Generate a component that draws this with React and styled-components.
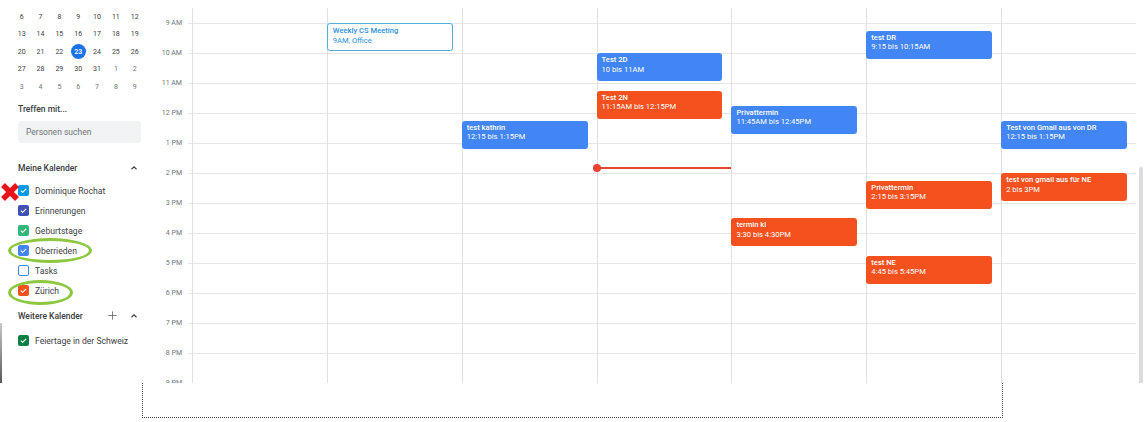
import React from "react";
import styled, { createGlobalStyle } from "styled-components";

const Global = createGlobalStyle`
  html, body { margin: 0; padding: 0; background: #fff; }
  body { font-family: Roboto, "Liberation Sans", Arial, sans-serif; color: #3c4043; }
  * { box-sizing: border-box; }
`;

const Page = styled.div`
  width: 1146px;
  height: 422px;
  display: flex;
  flex-direction: column;
  overflow: hidden;
  background: #fff;
`;

const AppRow = styled.div`
  height: 383px;
  display: flex;
`;

/* ---------- Sidebar ---------- */
const Sidebar = styled.aside`
  width: 160px;
  flex: none;
  position: relative;
  display: flex;
  flex-direction: column;
`;

const MiniCal = styled.div`
  display: grid;
  grid-template-columns: repeat(7, 18.83px);
  grid-auto-rows: 17.5px;
  padding: 8px 0 0 12.3px;
`;

const Day = styled.div`
  display: flex;
  align-items: center;
  justify-content: center;
  font-size: 7px;
  color: ${(p) => (p.$muted ? "#70757a" : "#3c4043")};
`;

const Today = styled.span`
  width: 15px;
  height: 15px;
  border-radius: 50%;
  background: #1a73e8;
  color: #fff;
  font-weight: 500;
  display: flex;
  align-items: center;
  justify-content: center;
`;

const SectionTitle = styled.div`
  height: 20px;
  margin-top: ${(p) => p.$mt || 0}px;
  padding: 0 18px;
  display: flex;
  align-items: center;
  font-size: 8.5px;
  font-weight: 500;
  color: #3c4043;
`;

const HeaderRow = styled(SectionTitle)`
  justify-content: space-between;
  padding-right: 21px;
`;

const HeaderIcons = styled.div`
  display: flex;
  align-items: center;
  gap: 11px;
`;

const Search = styled.div`
  margin: 2px 0 0 18px;
  width: 123px;
  height: 22px;
  border-radius: 3px;
  background: #f1f3f4;
  display: flex;
  align-items: center;
  padding-left: 8px;
  font-size: 8.5px;
  color: #70757a;
`;

const CalList = styled.div`
  margin-top: ${(p) => p.$mt || 0}px;
  display: flex;
  flex-direction: column;
`;

const CalItem = styled.div`
  height: 20px;
  display: flex;
  align-items: center;
  padding-left: 18px;
  gap: 6px;
  font-size: 8.6px;
  color: #3c4043;
`;

const Box = styled.span`
  width: 11px;
  height: 11px;
  border-radius: 2px;
  background: ${(p) => (p.$empty ? "#fff" : p.$color)};
  border: ${(p) => (p.$empty ? `1.5px solid ${p.$color}` : "none")};
  display: flex;
  align-items: center;
  justify-content: center;
  flex: none;
`;

const EdgeBar = styled.div`
  position: absolute;
  left: 0;
  top: 323px;
  width: 2px;
  height: 60px;
  background: linear-gradient(#c8c8c8, #5a5a5a);
`;

const RedCross = styled.svg`
  position: absolute;
  left: 0;
  top: 182px;
`;

const Ring = styled.div`
  position: absolute;
  left: ${(p) => p.$x}px;
  top: ${(p) => p.$y}px;
  width: ${(p) => p.$w}px;
  height: ${(p) => p.$h}px;
  border: 3px solid #8dc63f;
  border-radius: 50%;
`;

/* ---------- Main grid ---------- */
const Main = styled.main`
  flex: 1;
  display: flex;
  flex-direction: column;
  padding-top: 8px;
`;

const Viewport = styled.div`
  flex: 1;
  display: flex;
  overflow: hidden;
`;

const Gutter = styled.div`
  width: 32px;
  flex: none;
  display: flex;
  flex-direction: column;
`;

const HourSlot = styled.div`
  height: 30px;
  flex: none;
  position: relative;
  display: flex;
  align-items: center;
  justify-content: flex-end;
  padding-right: 10px;
  font-size: 7px;
  color: #70757a;
  &::after {
    content: "";
    position: absolute;
    right: 0;
    top: 15px;
    width: 4px;
    height: 1px;
    background: #e6e6e6;
  }
`;

const Days = styled.div`
  width: 944px;
  display: grid;
  grid-template-columns: repeat(7, 1fr);
`;

const DayCol = styled.div`
  position: relative;
  border-left: 1px solid #e0e0e0;
  background-image: repeating-linear-gradient(
    to bottom,
    transparent 0 15px,
    #e6e6e6 15px 16px,
    transparent 16px 30px
  );
`;

const Event = styled.div`
  position: absolute;
  left: -1px;
  width: calc(100% - 8px);
  height: 28px;
  border-radius: 3px;
  padding: 2px 5px;
  font-size: 7.6px;
  line-height: 9.5px;
  overflow: hidden;
  white-space: nowrap;
  background: ${(p) => (p.$kind === "outline" ? "#fff" : p.$kind === "orange" ? "#f4511e" : "#4285f4")};
  color: ${(p) => (p.$kind === "outline" ? "#2c8fe0" : "#fff")};
  border: ${(p) => (p.$kind === "outline" ? "1px solid #4fb0e0" : "none")};
`;

const EventTitle = styled.div`
  font-weight: 500;
`;

const EventTime = styled.div`
  font-weight: 400;
`;

const NowLine = styled.div`
  position: absolute;
  left: 0;
  right: 0;
  height: 1.5px;
  background: #ea4335;
  &::before {
    content: "";
    position: absolute;
    left: -5px;
    top: -3.5px;
    width: 8px;
    height: 8px;
    border-radius: 50%;
    background: #ea4335;
  }
`;

const ScrollTrack = styled.div`
  width: 10px;
  flex: none;
  padding: 159px 0 0 3px;
`;

const Thumb = styled.div`
  width: 4px;
  height: 100%;
  background: #dadce0;
  border-radius: 2px 2px 0 0;
`;

const Footer = styled.div`
  flex: 1;
  padding-left: 142px;
`;

const DottedBox = styled.div`
  width: 861px;
  height: 35px;
  border: 1px dotted #444;
  border-top: none;
`;

/* ---------- Icons ---------- */
const Check = () => (
  <svg width="9" height="9" viewBox="0 0 24 24">
    <path d="M5 12.5l4.5 4.5L19 7.5" fill="none" stroke="#fff" strokeWidth="3" />
  </svg>
);

const ChevronUp = () => (
  <svg width="10" height="10" viewBox="0 0 24 24">
    <path d="M6 15l6-6 6 6" fill="none" stroke="#3c4043" strokeWidth="2.8" />
  </svg>
);

const Plus = () => (
  <svg width="11" height="11" viewBox="0 0 24 24">
    <path d="M12 3v18M3 12h18" fill="none" stroke="#5f6368" strokeWidth="1.8" />
  </svg>
);

/* ---------- Data ---------- */
const weeks = [
  [6, 7, 8, 9, 10, 11, 12],
  [13, 14, 15, 16, 17, 18, 19],
  [20, 21, 22, 23, 24, 25, 26],
  [27, 28, 29, 30, 31, 1, 2],
  [3, 4, 5, 6, 7, 8, 9],
];

const myCals = [
  { name: "Dominique Rochat", color: "#039be5" },
  { name: "Erinnerungen", color: "#3f51b5" },
  { name: "Geburtstage", color: "#33b679" },
  { name: "Oberrieden", color: "#4285f4" },
  { name: "Tasks", color: "#4285f4", empty: true },
  { name: "Zürich", color: "#f4511e" },
];

const hours = ["9 AM", "10 AM", "11 AM", "12 PM", "1 PM", "2 PM", "3 PM", "4 PM", "5 PM", "6 PM", "7 PM", "8 PM", "9 PM"];

const columns = [
  [],
  [{ title: "Weekly CS Meeting", time: "9AM, Office", start: 9, kind: "outline" }],
  [{ title: "test kathrin", time: "12:15 bis 1:15PM", start: 12.25, kind: "blue" }],
  [
    { title: "Test 2D", time: "10 bis 11AM", start: 10, kind: "blue" },
    { title: "Test 2N", time: "11:15AM bis 12:15PM", start: 11.25, kind: "orange" },
  ],
  [
    { title: "Privattermin", time: "11:45AM bis 12:45PM", start: 11.75, kind: "blue" },
    { title: "termin kl", time: "3:30 bis 4:30PM", start: 15.5, kind: "orange" },
  ],
  [
    { title: "test DR", time: "9:15 bis 10:15AM", start: 9.25, kind: "blue" },
    { title: "Privattermin", time: "2:15 bis 3:15PM", start: 14.25, kind: "orange" },
    { title: "test NE", time: "4:45 bis 5:45PM", start: 16.75, kind: "orange" },
  ],
  [
    { title: "Test von Gmail aus von DR", time: "12:15 bis 1:15PM", start: 12.25, kind: "blue" },
    { title: "test von gmail aus für NE", time: "2 bis 3PM", start: 14, kind: "orange" },
  ],
];

const topFor = (h) => 15 + (h - 9) * 30;
const NOW = 13 + 50 / 60;
const NOW_COL = 3;

export default function App() {
  return (
    <Page>
      <Global />
      <AppRow>
        <Sidebar>
          <MiniCal>
            {weeks.map((w, wi) =>
              w.map((d, di) => {
                const muted = wi === 3 ? di >= 5 : wi === 4;
                return (
                  <Day key={`${wi}-${di}`} $muted={muted}>
                    {wi === 2 && d === 23 ? <Today>23</Today> : d}
                  </Day>
                );
              })
            )}
          </MiniCal>
          <SectionTitle $mt={3.5}>Treffen mit...</SectionTitle>
          <Search>Personen suchen</Search>
          <HeaderRow $mt={15}>
            <span>Meine Kalender</span>
            <ChevronUp />
          </HeaderRow>
          <CalList $mt={2.7}>
            {myCals.map((c) => (
              <CalItem key={c.name}>
                <Box $color={c.color} $empty={c.empty}>{!c.empty && <Check />}</Box>
                {c.name}
              </CalItem>
            ))}
          </CalList>
          <HeaderRow $mt={5}>
            <span>Weitere Kalender</span>
            <HeaderIcons>
              <Plus />
              <ChevronUp />
            </HeaderIcons>
          </HeaderRow>
          <CalList $mt={5}>
            <CalItem>
              <Box $color="#0b8043"><Check /></Box>
              Feiertage in der Schweiz
            </CalItem>
          </CalList>

          <EdgeBar />
          <RedCross width="20" height="20" viewBox="0 0 20 20">
            <path d="M3 3L17 17M17 3L3 17" stroke="#e8141b" strokeWidth="5.5" />
          </RedCross>
          <Ring $x={8} $y={238} $w={84} $h={25} />
          <Ring $x={8} $y={280} $w={65} $h={25} />
        </Sidebar>

        <Main>
          <Viewport>
            <Gutter>
              {hours.map((h) => (
                <HourSlot key={h}>{h}</HourSlot>
              ))}
            </Gutter>
            <Days>
              {columns.map((evs, ci) => (
                <DayCol key={ci}>
                  {evs.map((e) => (
                    <Event key={e.title + e.start} $kind={e.kind} style={{ top: topFor(e.start) }}>
                      <EventTitle>{e.title}</EventTitle>
                      <EventTime>{e.time}</EventTime>
                    </Event>
                  ))}
                  {ci === NOW_COL && <NowLine style={{ top: topFor(NOW) - 1 }} />}
                </DayCol>
              ))}
            </Days>
            <ScrollTrack>
              <Thumb />
            </ScrollTrack>
          </Viewport>
        </Main>
      </AppRow>
      <Footer>
        <DottedBox />
      </Footer>
    </Page>
  );
}
